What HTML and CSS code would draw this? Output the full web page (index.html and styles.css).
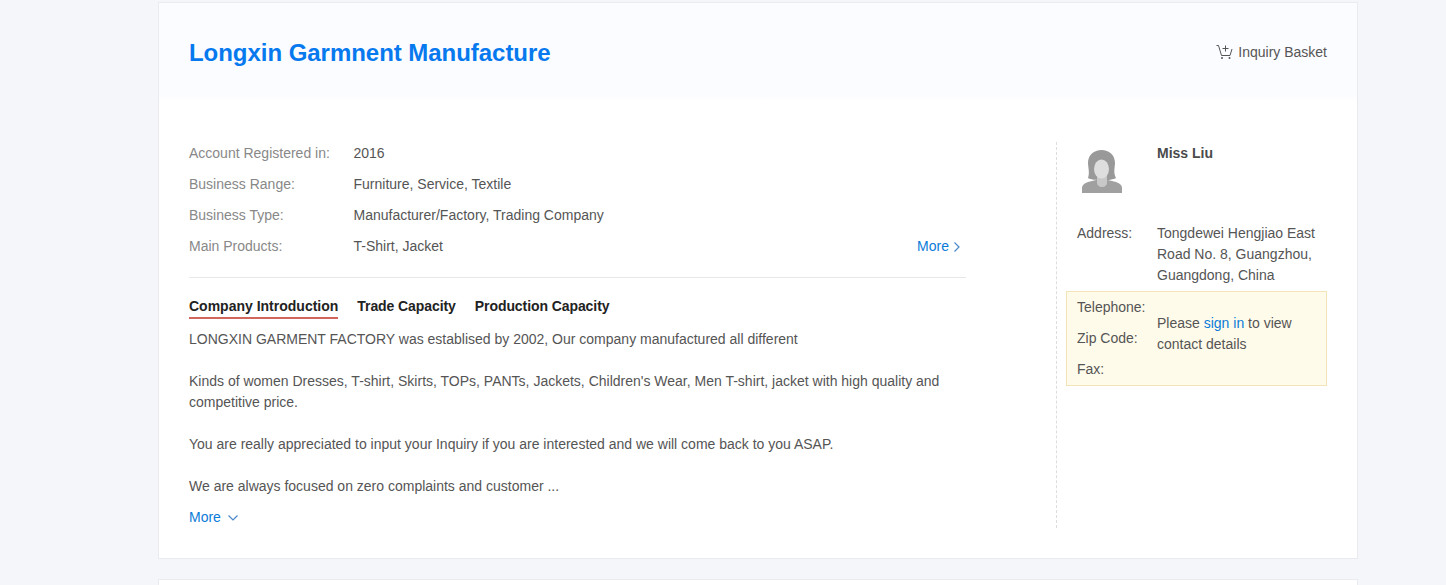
FILE: index.html
```html
<!DOCTYPE html>
<html lang="en">
<head>
    <meta charset="UTF-8" />
    <title>Longxin Garmnent Manufacture</title>
    <link rel="stylesheet" href="styles.css">
</head>
<body>
<main class="page">
    <section class="card">
        <header class="card-head">
            <h1 class="company-name">Longxin Garmnent Manufacture</h1>
            <a class="basket" href="#">
                <svg class="basket-icon" width="18" height="16" viewBox="0 0 18 16" fill="none" stroke="#555" stroke-width="1">
                    <path d="M0.5 1.5h2l3 10h8.5l2-6.5"/>
                    <path d="M6.5 4.5h6M9.5 1.5v6"/>
                    <circle cx="6" cy="14" r="1" fill="#555" stroke="none"/>
                    <circle cx="13.5" cy="14" r="1" fill="#555" stroke="none"/>
                </svg>
                Inquiry Basket
            </a>
        </header>

        <div class="card-body">
            <div class="info">
                <dl class="facts">
                    <div class="fact"><dt>Account Registered in:</dt><dd>2016</dd></div>
                    <div class="fact"><dt>Business Range:</dt><dd>Furniture, Service, Textile</dd></div>
                    <div class="fact"><dt>Business Type:</dt><dd>Manufacturer/Factory, Trading Company</dd></div>
                    <div class="fact">
                        <dt>Main Products:</dt>
                        <dd>T-Shirt, Jacket</dd>
                        <a class="more more-right" href="#">More
                            <svg width="8" height="12" viewBox="0 0 8 12" fill="none" stroke="#4a88c8" stroke-width="1.2"><path d="M1.5 1.5l4.5 4.5-4.5 4.5"/></svg>
                        </a>
                    </div>
                </dl>

                <nav class="tabs">
                    <a class="tab tab-active" href="#">Company Introduction</a>
                    <a class="tab" href="#">Trade Capacity</a>
                    <a class="tab" href="#">Production Capacity</a>
                </nav>

                <div class="intro">
                    <p>LONGXIN GARMENT FACTORY was establised by 2002, Our company manufactured all different</p>
                    <p>Kinds of women Dresses, T-shirt, Skirts, TOPs, PANTs, Jackets, Children's Wear, Men T-shirt, jacket with high quality and competitive price.</p>
                    <p>You are really appreciated to input your Inquiry if you are interested and we will come back to you ASAP.</p>
                    <p>We are always focused on zero complaints and customer ...</p>
                </div>
                <a class="more more-down" href="#">More
                    <svg width="12" height="8" viewBox="0 0 12 8" fill="none" stroke="#4a88c8" stroke-width="1.2"><path d="M1.5 1.5l4.5 4.5 4.5-4.5"/></svg>
                </a>
            </div>

            <aside class="contact">
                <div class="person">
                    <div class="avatar">
                        <svg width="40" height="43" viewBox="0 0 40 43">
                            <path d="M0 43v-5c0-3 3-5 6-6l8-2h12l8 2c3 1 6 3 6 6v5z" fill="#a0a0a0"/>
                            <path d="M6 28c2-5 0-11 0-15C6 5 12 0 19.5 0S33 5 33 13c0 4-2 10 1 15-4 3-24 3-28 0z" fill="#999"/>
                            <path d="M15 24h10v9c0 2-2 4-5 4s-5-2-5-4z" fill="#c8c8c8"/>
                            <ellipse cx="19.5" cy="19" rx="7.5" ry="9.5" fill="#dedede"/>
                        </svg>
                    </div>
                    <strong class="person-name">Miss Liu</strong>
                </div>
                <div class="address">
                    <span class="address-label">Address:</span>
                    <span class="address-text">Tongdewei Hengjiao East Road No. 8, Guangzhou, Guangdong, China</span>
                </div>
                <div class="locked">
                    <ul class="locked-labels">
                        <li>Telephone:</li>
                        <li>Zip Code:</li>
                        <li>Fax:</li>
                    </ul>
                    <p class="locked-text">Please <a href="#">sign in</a> to view contact details</p>
                </div>
            </aside>
        </div>
    </section>
    <section class="card card-next"></section>
</main>
</body>
</html>
```

FILE: styles.css
```css
* {
    margin: 0;
    padding: 0;
    box-sizing: border-box;
}
html, body {
    height: 585px;
    overflow: hidden;
    background-color: #f5f6fa;
    color: #555;
    font-family: "Liberation Sans", Arial, sans-serif;
    font-size: 14px;
    line-height: 21px;
}
a {
    color: #0b7bd8;
    text-decoration: none;
}
.page {
    width: 1200px;
    margin-left: 158px;
    padding-top: 2px;
}
.card {
    background: #fff;
    border: 1px solid #e9ebf0;
    height: 557px;
}
.card-next {
    height: 6px;
    margin-top: 20px;
    border-bottom: none;
}
.card-head {
    height: 98px;
    padding: 0 30px;
    display: flex;
    align-items: center;
    justify-content: space-between;
    background: linear-gradient(#fbfcff 94%, #fff);
}
.company-name {
    font-size: 24px;
    line-height: 30px;
    letter-spacing: -0.04px;
    color: #0779ee;
    margin-top: 2px;
}
.basket {
    color: #555;
    display: flex;
    align-items: center;
    gap: 4px;
}
.card-body {
    display: flex;
    padding: 41px 30px 0;
}
.info {
    width: 777px;
    padding-top: 1px;
}
.fact {
    display: flex;
    margin-bottom: 10px;
}
.fact dt {
    width: 164.5px;
    color: #888;
}
.fact dd {
    flex: 1;
}
.facts {
    padding-bottom: 10px;
    border-bottom: 1px solid #e8e8e8;
}
.more-right {
    display: flex;
    align-items: center;
    gap: 4px;
    margin-right: 5px;
}
.tabs {
    display: flex;
    gap: 19px;
    margin-top: 18px;
}
.tab {
    color: #222;
    font-weight: bold;
    border-bottom: 2px solid transparent;
    height: 23px;
    letter-spacing: -0.08px;
}
.tab-active {
    letter-spacing: 0;
    border-bottom-color: #d2665c;
}
.intro {
    margin-top: 10px;
}
.intro p {
    margin-bottom: 21px;
}
.intro p:last-child {
    margin-bottom: 0;
}
.more-down {
    display: flex;
    align-items: center;
    gap: 6px;
    margin-top: 10px;
}
.contact {
    width: 271px;
    height: 386px;
    margin-left: 90px;
    padding-left: 9px;
    border-left: 1px dashed #ddd;
}
.person {
    display: flex;
    height: 81px;
    padding-top: 1px;
    padding-left: 16px;
}
.avatar {
    width: 75px;
    padding-top: 7px;
}
.person-name {
    color: #4a4a4a;
}
.address {
    display: flex;
    padding-left: 11px;
    margin-bottom: 5px;
}
.address-label {
    width: 80px;
    flex: none;
}
.locked {
    display: flex;
    align-items: center;
    height: 95px;
    padding-left: 10px;
    background: #fffbea;
    border: 1px solid #f3e3b8;
}
.locked-labels {
    list-style: none;
    width: 80px;
    flex: none;
}
.locked-labels li {
    margin-bottom: 10px;
}
.locked-labels li:last-child {
    margin-bottom: 0;
}
.locked-text {
    padding-right: 10px;
    margin-bottom: 10px;
}
```
